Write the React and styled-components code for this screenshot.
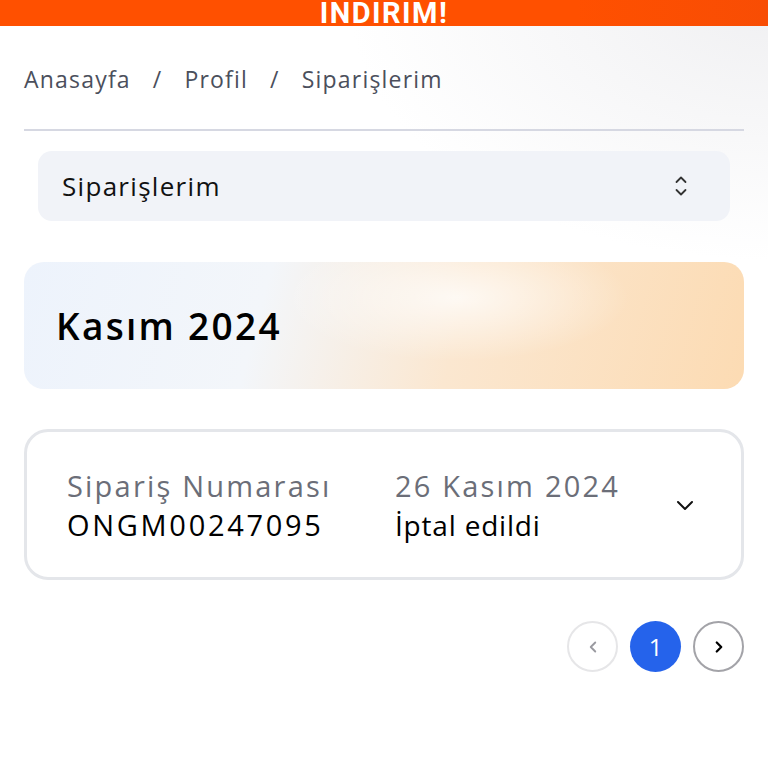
import React from "react";
import styled, { createGlobalStyle } from "styled-components";

const Global = createGlobalStyle`
  html, body { margin: 0; padding: 0; }
  body {
    font-family: "Open Sans", "Noto Sans", sans-serif;
    background: #fff;
    overflow: hidden;
  }
`;

const Page = styled.div`
  width: 768px;
  min-height: 768px;
  background:
    radial-gradient(ellipse 420px 260px at 100% 0%, #f0f0f2 0%, rgba(255,255,255,0) 100%),
    #ffffff;
`;

const Banner = styled.div`
  height: 26px;
  background: linear-gradient(90deg, #ff5000 0%, #ff5000 75%, #f84d04 100%);
  overflow: hidden;
  display: flex;
  justify-content: center;
  align-items: flex-start;
  box-sizing: border-box;
  padding-top: 1px;
`;

const BannerText = styled.span`
  color: #fff;
  font-family: Roboto, "Open Sans", sans-serif;
  font-weight: 700;
  font-size: 29px;
  line-height: 25px;
  letter-spacing: 1.5px;
`;

const Content = styled.div`
  padding: 0 24px;
  display: flex;
  flex-direction: column;
`;

const Crumbs = styled.nav`
  display: flex;
  align-items: center;
  gap: 22px;
  height: 105px;
  border-bottom: 2px solid #d6d8e2;
  font-size: 23px;
  letter-spacing: 1.2px;
  color: #4b4f5c;
  padding-top: 2px;
  box-sizing: border-box;
`;

const Select = styled.div`
  margin: 20px 14px 0;
  height: 70px;
  border-radius: 14px;
  background: #f1f3f8;
  display: flex;
  align-items: center;
  justify-content: space-between;
  padding: 0 42px 0 24px;
  font-size: 26px;
  letter-spacing: 1.3px;
  color: #111;
`;

const MonthCard = styled.div`
  margin-top: 41px;
  height: 127px;
  border-radius: 20px;
  background:
    radial-gradient(ellipse 24% 50% at 60% 28%, rgba(255,255,255,0.75), rgba(255,255,255,0) 100%),
    linear-gradient(105deg, #edf3fc 0%, #f3f6fa 33%, #fbe7d0 60%, #fcdbb3 100%);
  display: flex;
  align-items: center;
  padding: 0 32px;
  font-size: 37px;
  font-weight: 600;
  letter-spacing: 2.3px;
  color: #000;
`;

const OrderCard = styled.div`
  margin-top: 40px;
  height: 151px;
  box-sizing: border-box;
  border: 3px solid #e4e6ea;
  border-radius: 24px;
  display: grid;
  grid-template-columns: 328px 1fr auto;
  align-items: center;
  padding: 0 44px 0 40px;
`;

const Col = styled.div`
  display: flex;
  flex-direction: column;
  gap: 2px;
`;

const Label = styled.span`
  font-size: 29px;
  line-height: 38px;
  letter-spacing: 2.2px;
  color: #6b6e78;
`;

const Value = styled.span`
  font-size: ${p => p.$size || 29}px;
  line-height: 36px;
  font-weight: 500;
  letter-spacing: ${p => p.$ls ?? 2.7}px;
  color: #000;
`;

const Pager = styled.div`
  margin-top: 41px;
  display: flex;
  justify-content: flex-end;
  gap: 12px;
`;

const PageBtn = styled.div`
  width: 51px;
  height: 51px;
  box-sizing: border-box;
  border-radius: 50%;
  display: flex;
  align-items: center;
  justify-content: center;
  border: ${p => (p.$active ? "none" : `2px solid ${p.$muted ? "#e6e6e8" : "#a3a3a8"}`)};
  background: ${p => (p.$active ? "#2563eb" : "#fff")};
  color: ${p => (p.$active ? "#fff" : p.$muted ? "#9a9aa0" : "#000")};
  font-size: 24px;
`;

const Chevron = ({ d, w = 2, color = "currentColor", size = 20 }) => (
  <svg width={size} height={size} viewBox="0 0 24 24" fill="none" stroke={color} strokeWidth={w} strokeLinecap="round" strokeLinejoin="round">
    <path d={d} />
  </svg>
);

export default function App() {
  return (
    <Page>
      <Global />
      <Banner><BannerText>INDIRIM!</BannerText></Banner>
      <Content>
        <Crumbs>
          <span>Anasayfa</span><span>/</span><span>Profil</span><span>/</span><span>Siparişlerim</span>
        </Crumbs>
        <Select>
          <span>Siparişlerim</span>
          <svg width="14" height="26" viewBox="0 0 14 26" fill="none" stroke="#333" strokeWidth="1.8" strokeLinecap="round" strokeLinejoin="round">
            <path d="M2.5 9l4.5-4.5 4.5 4.5M2.5 17l4.5 4.5 4.5-4.5" />
          </svg>
        </Select>
        <MonthCard>Kasım 2024</MonthCard>
        <OrderCard>
          <Col>
            <Label>Sipariş Numarası</Label>
            <Value>ONGM00247095</Value>
          </Col>
          <Col>
            <Label>26 Kasım 2024</Label>
            <Value $size={28} $ls={0.8}>İptal edildi</Value>
          </Col>
          <Chevron d="M5 9l7 7 7-7" color="#111" size={24} w={2} />
        </OrderCard>
        <Pager>
          <PageBtn $muted><Chevron d="M15 6l-6 6 6 6" size={18} w={2.5} /></PageBtn>
          <PageBtn $active>1</PageBtn>
          <PageBtn><Chevron d="M9 6l6 6-6 6" size={18} w={3} /></PageBtn>
        </Pager>
      </Content>
    </Page>
  );
}
